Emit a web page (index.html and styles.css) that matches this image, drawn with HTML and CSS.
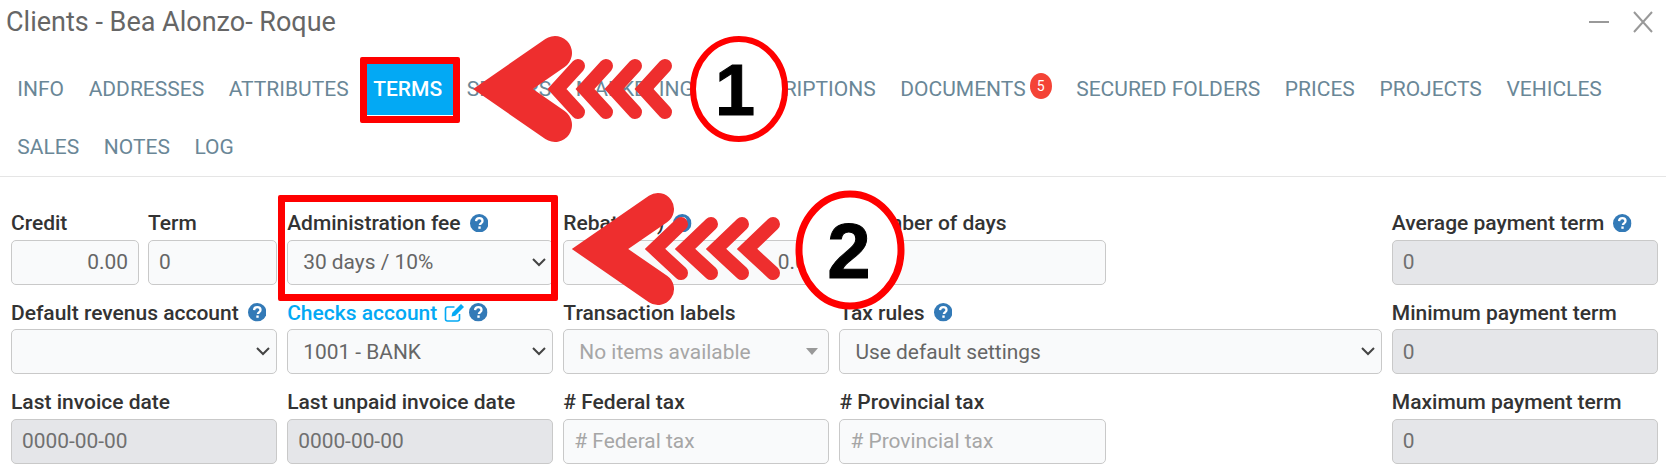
FILE: index.html
```html
<!DOCTYPE html>
<html>
<head>
    <meta charset="UTF-8">
    <title>Clients - Bea Alonzo- Roque</title>
    <link rel="stylesheet" href="styles.css">
</head>
<body>
    <div class="window">
        <div class="titlebar">
            <h1>Clients - Bea Alonzo- Roque</h1>
            <div class="window-controls">
                <svg width="20" height="4" viewBox="0 0 20 4"><path d="M0 2H20" stroke="#999" stroke-width="2"/></svg>
                <svg width="20" height="22" viewBox="0 0 20 22"><path d="M1 1L19 21M19 1L1 21" stroke="#999" stroke-width="2" fill="none"/></svg>
            </div>
        </div>

        <nav class="tabs">
            <a>INFO</a>
            <a>ADDRESSES</a>
            <a>ATTRIBUTES</a>
            <a class="active">TERMS</a>
            <a>SELLERS</a>
            <a>MARKETING</a>
            <a>SUBSCRIPTIONS</a>
            <a>DOCUMENTS<span class="badge">5</span></a>
            <a>SECURED FOLDERS</a>
            <a>PRICES</a>
            <a>PROJECTS</a>
            <a>VEHICLES</a>
            <a>SALES</a>
            <a>NOTES</a>
            <a>LOG</a>
        </nav>

        <form class="terms-form">
            <div class="split">
                <div class="field field-credit">
                    <label>Credit</label>
                    <input class="num" type="text" value="0.00">
                </div>
                <div class="field">
                    <label>Term</label>
                    <input type="text" value="0">
                </div>
            </div>
            <div class="field">
                <label>Administration fee <svg class="help"><use href="#help"/></svg></label>
                <select><option>30 days / 10%</option></select>
            </div>
            <div class="field">
                <label>Rebate (%) <svg class="help"><use href="#help"/></svg></label>
                <input class="num" type="text" value="0.00">
            </div>
            <div class="field">
                <label># Number of days</label>
                <input type="text">
            </div>
            <div></div>
            <div class="field">
                <label>Average payment term <svg class="help"><use href="#help"/></svg></label>
                <input type="text" value="0" disabled>
            </div>

            <div class="field">
                <label>Default revenus account <svg class="help"><use href="#help"/></svg></label>
                <select><option></option></select>
            </div>
            <div class="field">
                <label class="tight"><span class="link">Checks account</span>
                    <svg class="edit" width="21" height="21" viewBox="0 0 21 21" fill="none">
                        <path d="M15.500 12v5a2 2 0 0 1-2 2H3.500a2 2 0 0 1-2-2V7a2 2 0 0 1 2-2h7" stroke="#03a9f4" stroke-width="1.600"/>
                        <path d="M7.500 14.500l.8-3.800L17 2l3 3-8.700 8.700z" fill="#03a9f4"/>
                    </svg><svg class="help"><use href="#help"/></svg></label>
                <select><option>1001 - BANK</option></select>
            </div>
            <div class="field">
                <label>Transaction labels</label>
                <select class="empty"><option>No items available</option></select>
            </div>
            <div class="field wide">
                <label>Tax rules <svg class="help"><use href="#help"/></svg></label>
                <select><option>Use default settings</option></select>
            </div>
            <div class="field">
                <label>Minimum payment term</label>
                <input type="text" value="0" disabled>
            </div>

            <div class="field">
                <label>Last invoice date</label>
                <input type="text" value="0000-00-00" disabled>
            </div>
            <div class="field">
                <label>Last unpaid invoice date</label>
                <input type="text" value="0000-00-00" disabled>
            </div>
            <div class="field">
                <label># Federal tax</label>
                <input type="text" placeholder="# Federal tax">
            </div>
            <div class="field">
                <label># Provincial tax</label>
                <input type="text" placeholder="# Provincial tax">
            </div>
            <div></div>
            <div class="field">
                <label>Maximum payment term</label>
                <input type="text" value="0" disabled>
            </div>
        </form>
    </div>

    <!-- annotations drawn over the screenshot -->
    <div class="mark mark-tab"></div>
    <div class="mark mark-fee"></div>
    <svg class="callouts" width="1666" height="473" viewBox="0 0 1666 473">
        <g fill="none" stroke="#ee2e2e" stroke-linejoin="miter" stroke-miterlimit="10" stroke-linecap="round">
            <path d="M555 53L503 89L555 125" stroke-width="34"/>
            <g stroke-width="14" class="soft">
                <path d="M578 66L557 89L578 112"/>
                <path d="M606 66L585 89L606 112"/>
                <path d="M635 66L614 89L635 112"/>
                <path d="M665 66L644 89L665 112"/>
            </g>
            <path d="M658 209L600 249L658 289" stroke-width="32"/>
            <g stroke-width="14" class="soft">
                <path d="M681 224L655 249L681 273"/>
                <path d="M711 224L685 249L711 273"/>
                <path d="M742 224L716 249L742 273"/>
                <path d="M773 224L747 249L773 273"/>
            </g>
        </g>
        <ellipse cx="739" cy="89" rx="46" ry="50" fill="#fff" stroke="#f00" stroke-width="6"/>
        <text x="735" y="115" class="callout-num" font-size="72">1</text>
        <ellipse cx="850" cy="250" rx="51" ry="56" fill="#fff" stroke="#f00" stroke-width="7"/>
        <text x="849" y="278" class="callout-num" font-size="78">2</text>
    </svg>

    <svg width="0" height="0" class="defs">
        <symbol id="help" viewBox="0 0 18 18">
            <circle cx="9" cy="9" r="9" fill="#337ab7"/>
            <path d="M5.900 6.900C6 5 7.300 4 9.100 4c1.800 0 3.100 1.100 3.100 2.700 0 1.300-.8 1.900-1.600 2.500-.7.500-1 .8-1 1.600" fill="none" stroke="#fff" stroke-width="2.200"/>
            <rect x="8.100" y="12.100" width="2.300" height="2.300" fill="#fff"/>
        </symbol>
    </svg>
</body>
</html>
```

FILE: styles.css
```css
body {
    font-family: Roboto, sans-serif;
    margin: 0;
    background-color: white;
    color: #333;
    overflow: hidden;
}
.window {
    width: 1666px;
}
.titlebar {
    display: flex;
    justify-content: space-between;
    align-items: center;
    height: 44px;
    padding: 0 13px 0 6px;
    box-sizing: border-box;
}
h1 {
    margin: 0;
    font-size: 27px;
    font-weight: 400;
    color: #666;
}
.window-controls {
    display: flex;
    align-items: center;
    gap: 24px;
}
.tabs {
    display: flex;
    flex-wrap: wrap;
    align-content: flex-start;
    row-gap: 5.500px;
    padding: 18px 5px 0;
    height: 133px;
    box-sizing: border-box;
    border-bottom: 1px solid #e5e5e5;
}
.tabs a {
    display: flex;
    align-items: center;
    height: 53px;
    padding: 0 12.300px;
    font-size: 21px;
    color: #6a8797;
}
.tabs a.active {
    background-color: #03a9f4;
    color: white;
    font-weight: 500;
}
.badge {
    width: 22px;
    height: 26px;
    margin: -6px 0 0 4px;
    border-radius: 50%;
    background-color: #f44336;
    color: white;
    font-size: 14px;
    line-height: 26px;
    text-align: center;
}
.terms-form {
    display: grid;
    grid-template-columns: repeat(6, 1fr);
    column-gap: 10px;
    row-gap: 14px;
    padding: 32px 8px 0 11px;
}
.split {
    display: grid;
    grid-template-columns: 128px 1fr;
    column-gap: 9px;
}
.wide {
    grid-column: span 2;
}
label {
    display: flex;
    align-items: center;
    gap: 5px;
    height: 28px;
    margin-bottom: 2.500px;
    font-size: 21px;
    font-weight: 500;
    white-space: nowrap;
}
.link {
    color: #03a9f4;
}
.help {
    flex: none;
    width: 18.500px;
    height: 18.500px;
    margin-left: 4px;
}
.edit {
    flex: none;
    margin-left: 2px;
    margin-right: -5px;
}
input, select {
    display: block;
    width: 100%;
    height: 45px;
    box-sizing: border-box;
    padding: 0 10px;
    border: 1.500px solid #c9c9c9;
    border-radius: 5px;
    background-color: #f9fafb;
    font-family: Roboto, sans-serif;
    font-size: 20.900px;
    color: #666;
}
input::placeholder {
    color: #a6a6a6;
    opacity: 1;
}
input:disabled {
    background-color: #e5e6e9;
    color: #707070;
}
input.num {
    text-align: right;
}
select {
    padding-left: 15px;
    appearance: none;
    background-image: url("data:image/svg+xml,%3Csvg xmlns='http://www.w3.org/2000/svg' width='14' height='9'%3E%3Cpath d='M1 1l6 6 6-6' fill='none' stroke='%23444' stroke-width='2'/%3E%3C/svg%3E");
    background-repeat: no-repeat;
    background-position: right 6px center;
}
select.empty {
    color: #a6a6a6;
    background-image: url("data:image/svg+xml,%3Csvg xmlns='http://www.w3.org/2000/svg' width='12' height='7'%3E%3Cpath d='M0 0h12l-6 7z' fill='%23999'/%3E%3C/svg%3E");
    background-position: right 10px center;
}

.mark {
    position: absolute;
    box-sizing: border-box;
    border: 7px solid #f00;
    border-radius: 2px;
}
.mark-tab {
    left: 360px;
    top: 57px;
    width: 100px;
    height: 66px;
}
.mark-fee {
    left: 278px;
    top: 195px;
    width: 280px;
    height: 106px;
}
.callouts {
    position: absolute;
    left: 0;
    top: 0;
}
.soft {
    filter: blur(0.6px);
}
.callout-num {
    font-family: "Liberation Sans", sans-serif;
    font-weight: 700;
    text-anchor: middle;
    fill: #000;
    stroke: #000;
    stroke-width: 1;
}
.defs {
    position: absolute;
}
```
